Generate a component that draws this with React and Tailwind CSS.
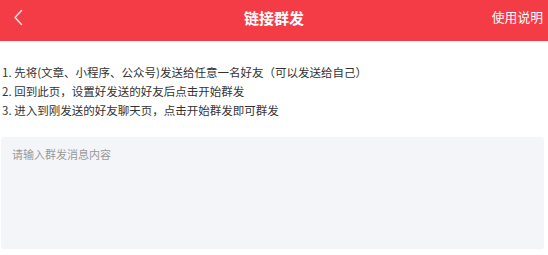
export default function App() {
  return (
    <div className="w-[548px] h-[255px] bg-white overflow-hidden" style={{ fontFamily: '"Noto Sans CJK SC", "Noto Sans", sans-serif' }}>
      <div className="h-[41px] bg-[#f43c47] relative">
        <div className="h-[34px] flex items-center justify-center">
          <div className="text-white font-bold text-[15px] leading-none">链接群发</div>
        </div>
        <svg className="absolute left-[12px] top-[9px]" width="12" height="17" viewBox="0 0 12 17" fill="none">
          <path d="M9.5 1.5 L3 8.5 L9.5 15.5" stroke="#fbe3e4" strokeWidth="1.5" strokeLinecap="round" strokeLinejoin="round" />
        </svg>
        <div className="absolute right-[5px] top-[11px] text-white text-[12.8px] leading-none">使用说明</div>
      </div>
      <div className="pt-[22px] pl-[2px] text-[#333] text-[11.5px] leading-[19px]">
        <div>1. 先将(文章、小程序、公众号)发送给任意一名好友（可以发送给自己）</div>
        <div>2. 回到此页，设置好发送的好友后点击开始群发</div>
        <div>3. 进入到刚发送的好友聊天页，点击开始群发即可群发</div>
      </div>
      <div className="mt-[17px] ml-[1px] w-[543px] h-[112px] bg-[#f4f5f9] rounded-[3px] pt-[12px] pl-[11px]">
        <div className="text-[#999] text-[11px] leading-none">请输入群发消息内容</div>
      </div>
    </div>
  );
}
